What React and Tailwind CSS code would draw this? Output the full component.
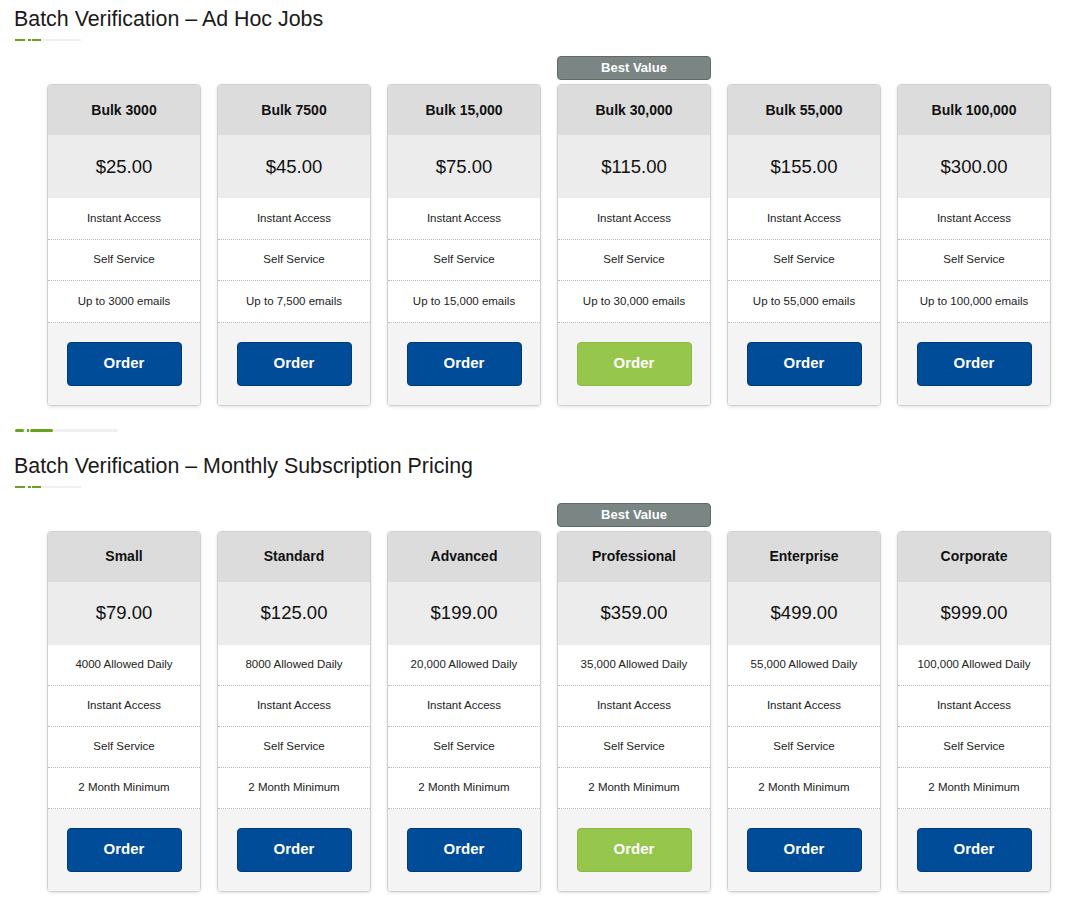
import React from 'react'

const adHoc = [
  { name: 'Bulk 3000', price: '$25.00', features: ['Instant Access', 'Self Service', 'Up to 3000 emails'] },
  { name: 'Bulk 7500', price: '$45.00', features: ['Instant Access', 'Self Service', 'Up to 7,500 emails'] },
  { name: 'Bulk 15,000', price: '$75.00', features: ['Instant Access', 'Self Service', 'Up to 15,000 emails'] },
  { name: 'Bulk 30,000', price: '$115.00', features: ['Instant Access', 'Self Service', 'Up to 30,000 emails'], best: true },
  { name: 'Bulk 55,000', price: '$155.00', features: ['Instant Access', 'Self Service', 'Up to 55,000 emails'] },
  { name: 'Bulk 100,000', price: '$300.00', features: ['Instant Access', 'Self Service', 'Up to 100,000 emails'] },
]

const monthly = [
  { name: 'Small', price: '$79.00', features: ['4000 Allowed Daily', 'Instant Access', 'Self Service', '2 Month Minimum'] },
  { name: 'Standard', price: '$125.00', features: ['8000 Allowed Daily', 'Instant Access', 'Self Service', '2 Month Minimum'] },
  { name: 'Advanced', price: '$199.00', features: ['20,000 Allowed Daily', 'Instant Access', 'Self Service', '2 Month Minimum'] },
  { name: 'Professional', price: '$359.00', features: ['35,000 Allowed Daily', 'Instant Access', 'Self Service', '2 Month Minimum'], best: true },
  { name: 'Enterprise', price: '$499.00', features: ['55,000 Allowed Daily', 'Instant Access', 'Self Service', '2 Month Minimum'] },
  { name: 'Corporate', price: '$999.00', features: ['100,000 Allowed Daily', 'Instant Access', 'Self Service', '2 Month Minimum'] },
]

// small green dashed rule under each title
const TitleRule = () => (
  <div className="flex items-center h-[2px] w-[66px] ml-[15px] mt-[7px] bg-[#f0f0f0]">
    <span className="h-[2px] w-[10px] bg-[#6aa121]" />
    <span className="h-[2px] w-[3px] ml-[3px] bg-[#6aa121]" />
    <span className="h-[2px] w-[9px] ml-[1px] bg-[#6aa121]" />
  </div>
)

const SectionRule = () => (
  <div className="flex items-center h-[3px] w-[103px] ml-[15px] rounded-full bg-[#f0f0f0]">
    <span className="h-[3px] w-[9px] rounded-full bg-[#6aa121]" />
    <span className="h-[3px] w-[2px] ml-[3px] bg-[#6aa121]" />
    <span className="h-[3px] w-[23px] ml-[1px] rounded-full bg-[#6aa121]" />
  </div>
)

const PlanCard = ({ plan, compact }) => (
  <div className="flex flex-col w-[154px]">
    <div className="h-[27px] flex items-end">
      {plan.best && (
        <div className="w-full h-[24px] mb-[4px] rounded-[4px] bg-[#7a8584] border border-[#5f6968] flex items-center justify-center text-white text-[13px] font-bold">
          Best Value
        </div>
      )}
    </div>
    <div className="border border-[#d0d0d0] rounded-[4px] overflow-hidden shadow-[0_1px_3px_rgba(0,0,0,0.12)]">
      <div className="h-[50px] bg-[#dcdcdc] flex items-center justify-center text-[14px] font-bold text-[#111]">
        {plan.name}
      </div>
      <div className="h-[63px] bg-[#ececec] flex items-center justify-center text-[18.5px] text-[#111]">
        {plan.price}
      </div>
      {plan.features.map((f, i) => (
        <div
          key={i}
          className={
            compact
              ? 'h-[41px] bg-white border-b border-dotted border-[#bbb] flex items-center justify-center text-[11.5px] text-[#222]'
              : 'h-[41.5px] bg-white border-b border-dotted border-[#bbb] flex items-center justify-center text-[11.5px] text-[#222]'
          }
        >
          {f}
        </div>
      ))}
      <div className="h-[82px] bg-[#f4f4f4] flex items-center justify-center">
        <button
          className={
            plan.best
              ? 'w-[115px] h-[44px] rounded-[4px] bg-[#97c64c] border border-[#8ab842] text-white text-[15px] font-bold'
              : 'w-[115px] h-[44px] rounded-[4px] bg-[#004c98] border border-[#003a78] text-white text-[15px] font-bold'
          }
        >
          Order
        </button>
      </div>
    </div>
  </div>
)

const Section = ({ title, plans, compact }) => (
  <div>
    <h2 className="ml-[14px] text-[21.4px] leading-[26px] text-[#1a1a1a]">{title}</h2>
    <TitleRule />
    <div className="flex gap-[16px] ml-[47px] mt-[16px]">
      {plans.map(p => <PlanCard key={p.name} plan={p} compact={compact} />)}
    </div>
  </div>
)

export default function App() {
  return (
    <div className="w-[1070px] h-[913px] bg-white pt-[6px] font-['Liberation_Sans',Arial,sans-serif]">
      <Section title="Batch Verification – Ad Hoc Jobs" plans={adHoc} />
      <div className="mt-[23px] mb-[21px]">
        <SectionRule />
      </div>
      <Section title="Batch Verification – Monthly Subscription Pricing" plans={monthly} compact />
    </div>
  )
}
